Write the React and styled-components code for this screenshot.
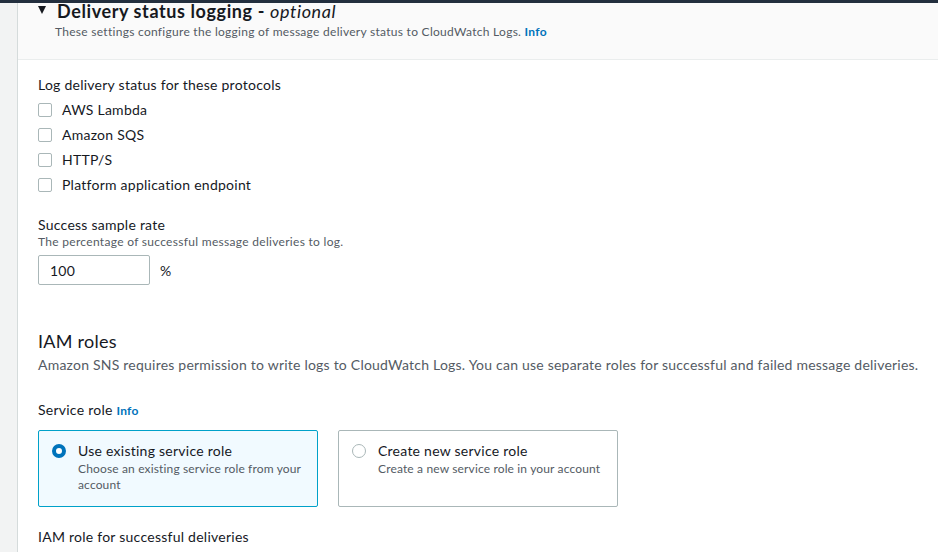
import React from "react";
import styled, { createGlobalStyle } from "styled-components";

const GlobalStyle = createGlobalStyle`
  html, body { margin: 0; padding: 0; background: #ffffff; }
  body { font-family: Lato, "Noto Sans", "Liberation Sans", sans-serif; color: #16191f; letter-spacing: 0.25px; }
  * { box-sizing: border-box; }
`;

const Page = styled.div`
  width: 938px;
  height: 552px;
  overflow: hidden;
  display: flex;
  flex-direction: column;
`;

const TopBar = styled.div`
  height: 3px;
  background: #232f3e;
  flex: none;
`;

const Frame = styled.div`
  flex: 1;
  display: flex;
`;

const SideRail = styled.div`
  width: 18px;
  flex: none;
  background: #f2f3f3;
  border-right: 1px solid #d5dbdb;
`;

const Main = styled.div`
  flex: 1;
  display: flex;
  flex-direction: column;
`;

const Header = styled.div`
  background: #fafafa;
  border-bottom: 1px solid #eaeded;
  height: 57px;
  padding: 0 0 0 20px;
`;

const Title = styled.h2`
  margin: -3px 0 0;
  font-size: 18px;
  line-height: 22px;
  font-weight: 700;
  letter-spacing: 0.6px;
  display: flex;
  align-items: center;
  gap: 11px;
`;

const Caret = styled.span`
  width: 0;
  height: 0;
  border-left: 4.5px solid transparent;
  border-right: 4.5px solid transparent;
  border-top: 8px solid #16191f;
  margin-top: -2px;
`;

const Optional = styled.em`
  font-weight: 400;
  font-style: italic;
`;

const HeaderDesc = styled.p`
  margin: 2px 0 0 17px;
  font-size: 12px;
  line-height: 16px;
  letter-spacing: 0.28px;
  color: #545b64;
`;

const InfoLink = styled.a`
  color: #0073bb;
  font-weight: 700;
  font-size: 12px;
  text-decoration: none;
`;

const Body = styled.div`
  padding: 15px 0 0 20px;
  display: flex;
  flex-direction: column;
`;

const Label = styled.div`
  font-size: 14px;
  line-height: 20px;
  color: #16191f;
`;

const CheckList = styled.div`
  display: flex;
  flex-direction: column;
  margin-top: 2px;
`;

const CheckRow = styled.label`
  display: flex;
  align-items: center;
  gap: 10px;
  height: 25px;
  font-size: 14px;
`;

const Box = styled.span`
  width: 14px;
  height: 14px;
  border: 1px solid #aab7b8;
  border-radius: 2px;
  background: #fff;
  flex: none;
`;

const Field = styled.div`
  margin-top: ${(p) => p.$top || 0}px;
  display: flex;
  flex-direction: column;
`;

const Hint = styled.div`
  margin-top: -1px;
  font-size: 12px;
  line-height: 16px;
  letter-spacing: 0.3px;
  color: #545b64;
`;

const InputRow = styled.div`
  display: flex;
  align-items: center;
  gap: 10px;
  margin-top: 5px;
`;

const TextInput = styled.div`
  width: 112px;
  height: 30px;
  border: 1px solid #aab7b8;
  border-radius: 2px;
  padding: 0 11px;
  display: flex;
  align-items: center;
  font-size: 14px;
`;

const Unit = styled.span`
  font-size: 14px;
`;

const SectionTitle = styled.h3`
  margin: 45px 0 0;
  font-size: 18px;
  line-height: 22px;
  font-weight: 400;
`;

const SectionDesc = styled.p`
  margin: 3px 0 0;
  font-size: 14px;
  line-height: 20px;
  letter-spacing: 0.22px;
  color: #545b64;
`;

const Tiles = styled.div`
  display: flex;
  gap: 20px;
  margin-top: 9px;
`;

const Tile = styled.div`
  width: 280px;
  height: 77px;
  border: 1px solid ${(p) => (p.$selected ? "#00a1c9" : "#aab7b8")};
  background: ${(p) => (p.$selected ? "#f1faff" : "#fff")};
  border-radius: 2px;
  padding: 10px 6px 0 13px;
  display: flex;
  gap: 12px;
`;

const Radio = styled.span`
  width: 14px;
  height: 14px;
  border-radius: 50%;
  flex: none;
  margin-top: 3px;
  background: #fff;
  border: ${(p) => (p.$checked ? "4px solid #0073bb" : "1px solid #aab7b8")};
`;

const TileText = styled.div`
  display: flex;
  flex-direction: column;
`;

const TileTitle = styled.div`
  font-size: 14px;
  line-height: 20px;
`;

const TileDesc = styled.div`
  font-size: 12px;
  line-height: 16px;
  letter-spacing: 0.15px;
  color: #545b64;
`;

const protocols = ["AWS Lambda", "Amazon SQS", "HTTP/S", "Platform application endpoint"];

export default function App() {
  return (
    <>
      <GlobalStyle />
      <Page>
        <TopBar />
        <Frame>
          <SideRail />
          <Main>
            <Header>
              <Title>
                <Caret />
                <span>
                  Delivery status logging - <Optional>optional</Optional>
                </span>
              </Title>
              <HeaderDesc>
                These settings configure the logging of message delivery status to CloudWatch Logs.{" "}
                <InfoLink href="#">Info</InfoLink>
              </HeaderDesc>
            </Header>
            <Body>
              <Label>Log delivery status for these protocols</Label>
              <CheckList>
                {protocols.map((p) => (
                  <CheckRow key={p}>
                    <Box />
                    {p}
                  </CheckRow>
                ))}
              </CheckList>
              <Field $top={18}>
                <Label>Success sample rate</Label>
                <Hint>The percentage of successful message deliveries to log.</Hint>
                <InputRow>
                  <TextInput>100</TextInput>
                  <Unit>%</Unit>
                </InputRow>
              </Field>
              <SectionTitle>IAM roles</SectionTitle>
              <SectionDesc>
                Amazon SNS requires permission to write logs to CloudWatch Logs. You can use separate roles for
                successful and failed message deliveries.
              </SectionDesc>
              <Field $top={25}>
                <Label>
                  Service role <InfoLink href="#">Info</InfoLink>
                </Label>
                <Tiles>
                  <Tile $selected>
                    <Radio $checked />
                    <TileText>
                      <TileTitle>Use existing service role</TileTitle>
                      <TileDesc>Choose an existing service role from your account</TileDesc>
                    </TileText>
                  </Tile>
                  <Tile>
                    <Radio />
                    <TileText>
                      <TileTitle>Create new service role</TileTitle>
                      <TileDesc>Create a new service role in your account</TileDesc>
                    </TileText>
                  </Tile>
                </Tiles>
              </Field>
              <Field $top={20}>
                <Label>IAM role for successful deliveries</Label>
              </Field>
            </Body>
          </Main>
        </Frame>
      </Page>
    </>
  );
}
